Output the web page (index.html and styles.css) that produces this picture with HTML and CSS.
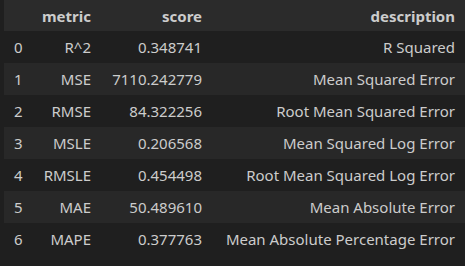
FILE: index.html
```html
<!DOCTYPE html>
<html>
<head>
<meta charset="utf-8">
<link rel="stylesheet" href="styles.css">
</head>
<body>
<table class="df">
  <colgroup>
    <col class="c-idx"><col class="c-metric"><col class="c-score"><col class="c-desc">
  </colgroup>
  <thead>
    <tr><th></th><th>metric</th><th>score</th><th>description</th></tr>
  </thead>
  <tbody>
    <tr><td class="idx">0</td><td>R^2</td><td>0.348741</td><td>R Squared</td></tr>
    <tr><td class="idx">1</td><td>MSE</td><td>7110.242779</td><td>Mean Squared Error</td></tr>
    <tr><td class="idx">2</td><td>RMSE</td><td>84.322256</td><td>Root Mean Squared Error</td></tr>
    <tr><td class="idx">3</td><td>MSLE</td><td>0.206568</td><td>Mean Squared Log Error</td></tr>
    <tr><td class="idx">4</td><td>RMSLE</td><td>0.454498</td><td>Root Mean Squared Log Error</td></tr>
    <tr><td class="idx">5</td><td>MAE</td><td>50.489610</td><td>Mean Absolute Error</td></tr>
    <tr><td class="idx">6</td><td>MAPE</td><td>0.377763</td><td>Mean Absolute Percentage Error</td></tr>
  </tbody>
</table>
</body>
</html>
```
FILE: styles.css
```css
html, body {
  margin: 0;
  padding: 0;
  background: #1f1f1f;
}
body {
  padding-left: 4px;
  font-family: "Noto Sans", "Open Sans", sans-serif;
  font-size: 15px;
  color: #cccccc;
}
.df {
  border-collapse: collapse;
  table-layout: fixed;
  width: 461px;
}
.c-idx { width: 36px; }
.c-metric { width: 61px; }
.c-score { width: 111px; }
.c-desc { width: 253px; }
.df th, .df td {
  text-align: right;
  padding: 0 10px 0 0;
  white-space: nowrap;
}
.df thead tr {
  background: #2b2b2b;
  height: 31px;
}
.df th { font-weight: 700; }
.df tbody tr { height: 32px; }
.df tbody tr:nth-child(even) { background: #282828; }
.df td.idx {
  text-align: left;
  padding-left: 10px;
}
```
